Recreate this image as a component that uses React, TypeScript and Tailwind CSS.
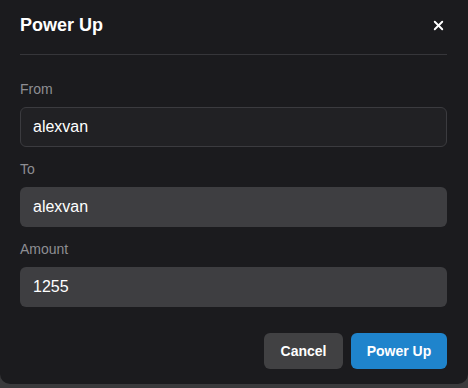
import { X } from 'lucide-react';

type Field = {
  label: string;
  value: string;
  focused?: boolean;
};

const fields: Field[] = [
  { label: 'From', value: 'alexvan', focused: true },
  { label: 'To', value: 'alexvan' },
  { label: 'Amount', value: '1255' },
];

export default function App() {
  return (
    <div
      className="w-[468px] h-[388px] bg-[#3a3a3c] overflow-hidden"
      style={{ fontFamily: '"Liberation Sans", Arial, sans-serif' }}
    >
      <div className="h-[384px] bg-[#1b1b1e] rounded-b-[10px] flex flex-col">
        <div className="ml-5 mr-[21px] flex items-center justify-between pt-[11px] pb-[15px] border-b border-[#36363a]">
          <h2 className="text-[18px] leading-7 font-bold text-white">Power Up</h2>
          <button className="text-white mr-[1px]">
            <X className="w-[15px] h-[15px]" strokeWidth={3} />
          </button>
        </div>

        <div className="pl-5 pr-[21px] pt-6 flex flex-col gap-3">
          {fields.map((f) => (
            <div key={f.label} className="flex flex-col gap-2">
              <label className="text-[14px] leading-5 text-[#8e8e93]">{f.label}</label>
              <div
                className={
                  f.focused
                    ? 'h-10 rounded-md border border-[#3b3b3f] bg-[#212124] flex items-center px-[12px] text-[16px] text-white'
                    : 'h-10 rounded-md bg-[#3e3e41] flex items-center px-[13px] text-[16px] text-white'
                }
              >
                {f.value}
              </div>
            </div>
          ))}
        </div>

        <div className="pl-5 pr-[21px] pt-[26px] flex justify-end gap-2">
          <button className="h-9 w-[79px] rounded-md bg-[#414143] text-white text-[14px] font-bold">
            Cancel
          </button>
          <button className="h-9 w-[96px] rounded-md bg-[#1f84cc] text-white text-[14px] font-bold">
            Power Up
          </button>
        </div>
      </div>
    </div>
  );
}
